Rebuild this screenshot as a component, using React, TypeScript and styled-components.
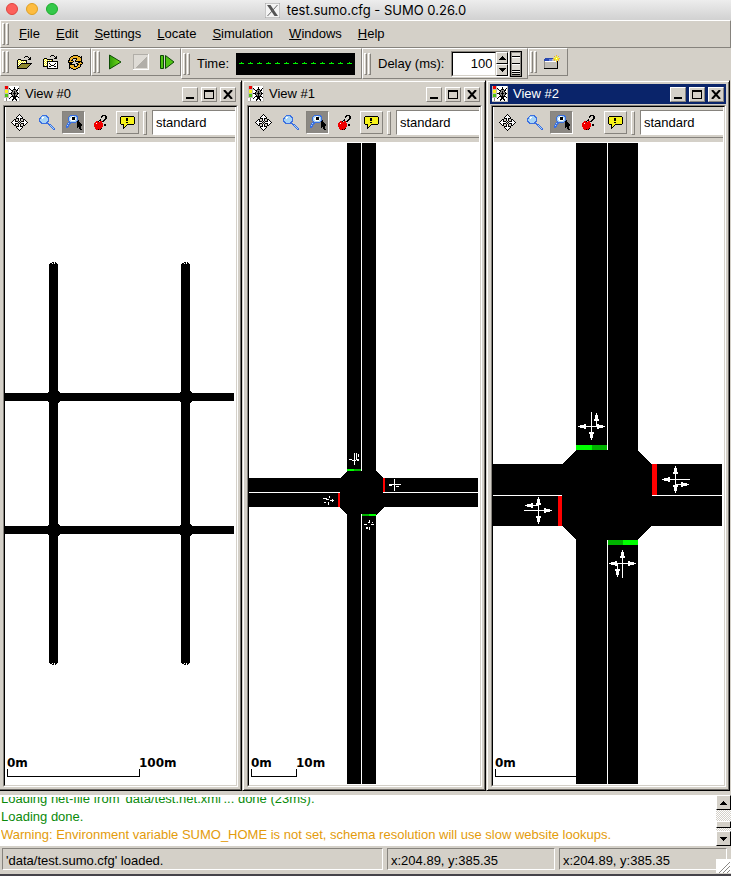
import React from "react";
import styled, { createGlobalStyle, css } from "styled-components";

const face = "#d4d0c8";
const shade = "#86837d";
const uiFont = `"Liberation Sans", Arial, Helvetica, sans-serif`;
const titleFont = `Inter, "Helvetica Neue", sans-serif`;

const GlobalStyle = createGlobalStyle`
  *, *::before, *::after { box-sizing: border-box; }
  html, body { margin: 0; padding: 0; }
  body { background: ${face}; color: #000; font: 13px/18px ${uiFont}; }
  button, input, select { font: inherit; color: inherit; margin: 0; padding: 0; border-radius: 0; }
`;

const raised = css`
  border: 1px solid;
  border-color: #fff ${shade} ${shade} #fff;
`;
const sunken = css`
  border: 1px solid;
  border-color: ${shade} #fff #fff ${shade};
`;

const Page = styled.div`
  display: flex;
  flex-direction: column;
  height: 100vh;
  min-height: 500px;
  overflow: hidden;
`;

const TitleBar = styled.header`
  display: grid;
  grid-template-columns: 1fr auto 1fr;
  align-items: center;
  height: 20px;
  flex: none;
  padding: 0 6px;
  background: linear-gradient(#ededed, #d1d1d1);
`;
const Lights = styled.div`
  display: flex;
  gap: 8px;
  padding-bottom: 2px;
`;
const Light = styled.button<{ $fill: string; $edge: string }>`
  width: 12px;
  height: 12px;
  border: 1px solid ${(p) => p.$edge};
  border-radius: 50%;
  background: ${(p) => p.$fill};
`;
const AppTitle = styled.h1`
  display: flex;
  align-items: center;
  gap: 7px;
  margin: 0;
  font: 400 13px/18px ${titleFont};
  white-space: nowrap;
`;

const MenuBar = styled.nav`
  display: flex;
  align-items: center;
  flex: none;
  height: 28px;
  padding-left: 1px;
  ${raised}
`;
const MenuItem = styled.button`
  border: 0;
  padding: 0 8px;
  background: none;
  line-height: 18px;
  &::first-letter { text-decoration: underline; }
`;

const Grip = styled.span`
  display: flex;
  flex: none;
  gap: 1px;
  &::before, &::after {
    content: "";
    width: 3px;
    height: 22px;
    border: 1px solid;
    border-color: #fff ${shade} ${shade} #fff;
  }
`;
const MenuGrip = styled(Grip)`
  margin-right: 2px;
`;

const DockRow = styled.div`
  display: flex;
  align-items: flex-start;
  flex: none;
  height: 32px;
`;
const Dock = styled.div<{ $width: number; $tall?: boolean }>`
  display: flex;
  align-items: center;
  gap: 3px;
  width: ${(p) => p.$width}px;
  height: ${(p) => (p.$tall ? 31 : 28)}px;
  flex: none;
  padding-left: 1px;
  ${raised}
`;
const ToolButton = styled.button<{ $look?: "raised" | "pressed" }>`
  display: flex;
  align-items: center;
  justify-content: center;
  flex: none;
  width: 23px;
  height: 23px;
  border: 1px solid transparent;
  background: ${(p) => (p.$look === "pressed" ? "#8b8883" : "transparent")};
  border-color: ${(p) =>
    p.$look === "raised"
      ? `#fff ${shade} ${shade} #fff`
      : p.$look === "pressed"
        ? `${shade} #fff #fff ${shade}`
        : "transparent"};
`;
const DockLabel = styled.label`
  padding: 0 4px;
  white-space: nowrap;
`;
const Lcd = styled.output`
  display: flex;
  flex: none;
  width: 119px;
  height: 22px;
  background: #000;
`;
const Spinner = styled.div`
  display: flex;
  flex: none;
  width: 58px;
  height: 26px;
  border: 1px solid;
  border-color: ${shade} #fff #fff ${shade};
`;
const SpinInput = styled.input`
  flex: 1;
  min-width: 0;
  border: 1px solid;
  border-color: #000 ${face} ${face} #000;
  padding-right: 3px;
  background: #fff;
  text-align: right;
`;
const Steps = styled.div`
  display: flex;
  flex-direction: column;
  width: 12px;
`;
const StepButton = styled.button`
  display: flex;
  align-items: center;
  justify-content: center;
  flex: 1;
  min-height: 0;
  border: 1px solid;
  border-color: #fff #000 #000 #fff;
  background: ${face};
`;
const Dial = styled.button`
  display: flex;
  flex: none;
  width: 12px;
  height: 26px;
  margin-left: -2px;
  border: 1px solid #000;
  background: ${face};
`;

const Workspace = styled.main`
  display: grid;
  grid-template-columns: repeat(3, minmax(0, 1fr));
  flex: 1;
  min-height: 0;
  margin: 0 1px 0 -2px;
`;
const ViewWindow = styled.section`
  display: flex;
  flex-direction: column;
  min-width: 0;
  min-height: 0;
  padding: 3px;
  border: 1px solid;
  border-color: ${face} #000 #000 ${face};
  box-shadow: inset 1px 1px 0 #fff, inset -1px -1px 0 #6f6c68;
`;
const ViewTitle = styled.header<{ $active?: boolean }>`
  display: flex;
  align-items: center;
  gap: 3px;
  flex: none;
  height: 20px;
  padding: 0 2px;
  color: ${(p) => (p.$active ? "#fff" : "#000")};
  background: ${(p) => (p.$active ? "#0a246a" : face)};
`;
const ViewName = styled.h2`
  flex: 1;
  margin: 0;
  padding-left: 2px;
  font: 400 13px/18px ${uiFont};
  white-space: nowrap;
`;
const WindowButton = styled.button`
  display: flex;
  align-items: center;
  justify-content: center;
  width: 16px;
  height: 15px;
  ${raised}
  background: ${face};
`;
const ViewFrame = styled.div`
  display: flex;
  flex-direction: column;
  flex: 1;
  min-height: 0;
  margin: 1px 0 0 1px;
  border: 1px solid;
  border-color: ${shade} #fff #fff ${shade};
`;
const ViewBody = styled.div`
  display: flex;
  flex-direction: column;
  flex: 1;
  min-height: 0;
  border: 1px solid;
  border-color: #000 ${face} ${face} #000;
  background: #fff;
`;
const ViewTools = styled.div`
  display: flex;
  align-items: center;
  flex: none;
  gap: 4px;
  height: 35px;
  margin-right: 1px;
  padding: 0 0 4px 2px;
  overflow: hidden;
  background: linear-gradient(${shade}, ${shade}) 0 30px / 100% 1px no-repeat, ${face};
  border-left: 1px solid #fff;
`;
const ThinGrip = styled.span`
  flex: none;
  width: 4px;
  height: 24px;
  ${raised}
`;
const SchemeSelect = styled.select`
  appearance: none;
  flex: 1 0 84px;
  height: 25px;
  margin-left: 1px;
  border: 1px solid;
  border-color: ${shade} #fff #fff ${shade};
  padding-left: 3px;
  background: #fff;
`;
const Canvas = styled.svg`
  display: block;
  flex: 1 1 0;
  min-height: 0;
  width: 100%;
  padding: 1px 2px 1px 0;
`;

const LogRow = styled.section`
  display: flex;
  flex: none;
  height: 51px;
  margin-top: 4px;
  background: #fff;
`;
const LogText = styled.div`
  display: flex;
  flex-direction: column;
  justify-content: flex-end;
  flex: 1;
  min-width: 0;
  margin: 2px 0 2px 1px;
  overflow: hidden;
  white-space: nowrap;
`;
const LogLine = styled.p<{ $warning?: boolean }>`
  flex: none;
  margin: 0;
  color: ${(p) => (p.$warning ? "#e39b0b" : "#0a8a0a")};
`;
const ScrollBar = styled.div`
  display: flex;
  flex-direction: column;
  width: 15px;
  background: repeating-conic-gradient(#fff 0 25%, ${face} 0 50%) 0 0 / 2px 2px;
`;
const ScrollButton = styled.button`
  display: flex;
  align-items: center;
  justify-content: center;
  height: 15px;
  border: 1px solid;
  border-color: #fff #000 #000 #fff;
  background: ${face};
`;
const ScrollTrack = styled.div`
  display: flex;
  flex-direction: column;
  justify-content: flex-end;
  flex: 1;
  padding-bottom: 3px;
`;
const ScrollThumb = styled.div`
  height: 7px;
  border: 1px solid;
  border-color: #fff #000 #000 #fff;
  background: ${face};
`;

const StatusBar = styled.footer`
  display: flex;
  gap: 4px;
  flex: none;
  height: 30px;
  padding: 2px 4px 4px 2px;
  border-bottom: 2px solid #45434a;
  background: ${face};
`;
const StatusField = styled.div<{ $grow?: boolean }>`
  flex: ${(p) => (p.$grow ? "1 1 0" : "0 0 168px")};
  min-width: 0;
  padding: 3px 3px 1px;
  white-space: nowrap;
  overflow: hidden;
  ${sunken}
`;
const SizeGrip = styled.span`
  display: flex;
  align-self: flex-end;
  flex: none;
  margin: 0 -4px -3px -15px;
  background: #fff;
`;

const palette: Record<string, string> = {
  X: "#000", W: "#fff", Y: "#f6f21a", y: "#8f8a2e", O: "#f0b429", G: "#4fc514",
  B: "#3b6fe0", b: "#a8d4f5", R: "#f00000", S: "#8a8884", s: "#c0bdb6", N: "#2a49b0", n: "#6b83dd",
};

function Pixels({ rows }: { rows: string[] }) {
  const width = rows[0].length;
  return (
    <svg width={width} height={rows.length} viewBox={`0 0 ${width} ${rows.length}`} shapeRendering="crispEdges" aria-hidden="true">
      {rows.flatMap((row, y) =>
        [...row].map((c, x) => (palette[c] ? <rect key={`${x}-${y}`} x={x} y={y} width="1" height="1" fill={palette[c]} /> : null)),
      )}
    </svg>
  );
}

const moveIcon = [
  "........X........",
  ".......XWX.......",
  "......XWWWX......",
  ".....XWWWWWX.....",
  ".....XXXWXXX.....",
  "...XX..XWX..XX...",
  "..XWX..XWX..XWX..",
  ".XWWXXX.X.XXXWWX.",
  "XWWWWWWX.XWWWWWWX",
  ".XWWXXX.X.XXXWWX.",
  "..XWX..XWX..XWX..",
  "...XX..XWX..XX...",
  ".....XXXWXXX.....",
  ".....XWWWWWX.....",
  "......XWWWX......",
  ".......XWX.......",
  "........X........",
];
const zoomIcon = [
  "...BBBBB........",
  "..BbbbbBB.......",
  ".BbWWbbbBB......",
  "BBbWbbbbbB......",
  "BbbbbbbbbB......",
  "BbbbbbbbbB......",
  "BBbbbbbbBB......",
  ".BBbbbbBB.......",
  "..BBBBBBBB......",
  ".........BBB....",
  "..........BbB...",
  "...........BbB..",
  "............BbB.",
  ".............BbB",
  "..............BB",
];
const zoomStyleIcon = [
  "....BBBBBBB.....",
  "...BbbWWbbBB....",
  "..BbbWXXXbbB....",
  "..BbWWXXXWbB....",
  "..BbWWXXXWbB....",
  "..BbbWWWWbbBX...",
  "...BbbbbbbBXX...",
  "..BBBBBBBB.XXX..",
  ".BbBB......XXXX.",
  ".BBB.......XXXXX",
  "BbB........XXXXX",
  "BBB........XXXX.",
  "BB.........X.XX.",
  ".............XX.",
  "..............XX",
];
const appleIcon = [
  "........XXXX..",
  ".......XX..XX.",
  ".......X...XX.",
  "...........XX.",
  "......X...XX..",
  ".....XX..XX...",
  "..RRX.RRXX....",
  ".RRRRRRR......",
  "RRWRRRRRR.....",
  "RRRRRRRRR.XX..",
  "RRRRRRRRR.XX..",
  "RRRRRRRRR.....",
  ".RRRRRRR......",
  ".RRRRRRX......",
  "..RRXRX.......",
];
const bubbleIcon = [
  ".XXXXXXXXXXXXX.",
  "XYYYYYYYYYYYYYX",
  "XYYYYYXXYYYYYYX",
  "XYYYYYXXYYYYYYX",
  "XYYYYYXXYYYYYYX",
  "XYYYYYYYYYYYYYX",
  "XYYYYYXXYYYYYYX",
  "XYYYYYYYYYYYYYX",
  ".XXXYYYXXXXXXX.",
  "...XYYX........",
  "...XYX.........",
  "...XX..........",
  "...X...........",
];
const openIcon = [
  ".........XXX....",
  "........X...X.X.",
  ".............XX.",
  "..XXX.......XXX.",
  ".XYWYXXXXXX.....",
  ".XWYWYWYWYX.....",
  ".XYWYWYWYWX.....",
  ".XWYWXXXXXXXXXXX",
  ".XYWXyyyyyyyyyX.",
  ".XWXyyyyyyyyyX..",
  ".XXyyyyyyyyyX...",
  ".XyyyyyyyyyX....",
  ".XXXXXXXXXX.....",
];
const openConfigIcon = [
  ".........XXX....",
  "........X...X.X.",
  ".............XX.",
  "..XXX.......XXX.",
  ".XYWYXXXXXX.....",
  ".XWYWYWYWYX.....",
  ".XYWYXXXXXXXXXXX",
  ".XWYWXWWWWWWWWWX",
  ".XYWYXWXWWWWWXWX",
  ".XWYWXWWXWWWXWWX",
  ".XYWYXWWWXXXWWWX",
  ".XXXXXWXXWWWXXWX",
  ".....XWWWWWWWWWX",
  ".....XXXXXXXXXXX",
];
const reloadIcon = [
  ".....XXXXX.....",
  "...XXOOOOOXX.X.",
  "..XOOOOOOOOOXX.",
  ".XOOOXXXXOOOOX.",
  ".XOOX...XOOOOX.",
  "XXOXX..XOOOOOX.",
  "XOOOOX.XXXXXXX.",
  "XXXXX.....XXOXX",
  ".XXX....XXOOOOX",
  ".XXXXXX..XXOXX.",
  ".XOOOOX..XOOX..",
  ".XOOOOXXXOOOX..",
  ".XXOOOOOOOXX...",
  ".X.XXOOOXX.....",
  ".....XXX.......",
];
const trafficIcon = [
  "sRRRsWWWWWWWWWWs",
  "sRRRsWWWWWXWWWWs",
  "sRRRsXWWWWXWWWXs",
  "ssssssXWWXXXWXWs",
  "sYYYsWWXXSSSXXWs",
  "sYYYsWWWXSXSXWWs",
  "sYYYsWWXSSXSSXWs",
  "sssssXXXSXXXSXXs",
  "sGGGsWWXSSXSSXWs",
  "sGGGsWWWXSXSXWWs",
  "sGGGsWWXXXXXXXWs",
  "sssssWXWWXXXWWXs",
  "WWSWWXWWWXXXWWWs",
  "WWSWWWWWXXWXXWWs",
  "WWSWWWWWXWWWXWWs",
  "ssssssssssssssss",
];
const newWindowIcon = [
  "............O...",
  "..........O.Y.O.",
  "...........YYY..",
  ".NNNNNNNNOYYWYYO",
  "NNNNNnnnssOYYYO.",
  "NNNNNnnnssO.Y.O.",
  "SWWWWWWWWWWWOX..",
  "SssssssssssssX..",
  "SssssssssssssX..",
  "SssssssssssssX..",
  "SssssssssssssX..",
  "SssssssssssssX..",
  "SssssssssssssX..",
  "XXXXXXXXXXXXXX..",
];

function PlayIcon() {
  return (
    <svg width="14" height="16" viewBox="0 0 14 16" aria-hidden="true">
      <defs>
        <linearGradient id="play" x1="0" x2="1"><stop stopColor="#2c9c08" /><stop offset="1" stopColor="#7be01f" /></linearGradient>
      </defs>
      <path d="M1.5 1 13 8 1.5 15Z" fill="url(#play)" stroke="#0c4a04" />
    </svg>
  );
}
function StopIcon() {
  return (
    <svg width="16" height="16" viewBox="0 0 16 16" shapeRendering="crispEdges" aria-hidden="true">
      <path d="M0 0h16v16H0z" fill="#dedbd5" />
      <path d="M14 2v12H2z" fill="#b1aea8" />
      <path d="M0 15V0h15" fill="none" stroke="#b1aea8" />
      <path d="M15.5 0v15.5H0" fill="none" stroke="#fff" />
    </svg>
  );
}
function StepIcon() {
  return (
    <svg width="16" height="16" viewBox="0 0 16 16" aria-hidden="true">
      <path d="M1.5 1.5h3v13h-3z" fill="#4fc514" stroke="#0c4a04" />
      <path d="M6.5 1.5 15 8 6.5 14.5Z" fill="#4fc514" stroke="#0c4a04" />
    </svg>
  );
}
function XLogo() {
  return (
    <svg width="15" height="15" viewBox="0 0 15 15" aria-hidden="true">
      <path d="M0 0h15v15H0z" fill="#f4f4f4" stroke="#999" />
      <path d="M2 2h3.5L13 13H9.5Z" fill="#555" />
      <path d="M12.5 2 2.5 13" stroke="#666" fill="none" />
    </svg>
  );
}
function Arrow({ down }: { down?: boolean }) {
  return (
    <svg width="7" height="4" viewBox="0 0 7 4" shapeRendering="crispEdges" aria-hidden="true">
      <path d={down ? "M0 0h7v1H0zM1 1h5v1H1zM2 2h3v1H2zM3 3h1v1H3z" : "M3 0h1v1H3zM2 1h3v1H2zM1 2h5v1H1zM0 3h7v1H0z"} />
    </svg>
  );
}
function LcdDigits() {
  return (
    <svg width="119" height="22" viewBox="0 0 119 22" shapeRendering="crispEdges" role="img" aria-label="no time">
      {Array.from({ length: 13 }, (_, i) => (
        <path key={i} d={`M${3 + i * 9} 10h5v1h-5zM${5 + i * 9} 9h1v1h-1z`} fill="#00f000" />
      ))}
    </svg>
  );
}
function DialFace() {
  return (
    <svg width="10" height="24" viewBox="0 0 10 24" shapeRendering="crispEdges" aria-hidden="true">
      <path d="M0 0h10v24H0z" fill="#8f8c86" />
      <path d="M1 1h8v22H1z" fill="#dedbd4" />
      <path d="M1 4h8v1H1zM1 11h8v1H1zM1 18h8v1H1zM1 20h8v1H1zM1 22h8v1H1z" />
      <path d="M1 5h8v1H1zM1 12h8v1H1zM1 19h8v1H1z" fill="#fff" />
    </svg>
  );
}
function WindowGlyph({ kind }: { kind: "minimize" | "maximize" | "close" }) {
  return (
    <svg width="10" height="9" viewBox="0 0 10 9" shapeRendering={kind === "close" ? "auto" : "crispEdges"} aria-hidden="true">
      {kind === "minimize" && <path d="M1 7h8v2H1z" />}
      {kind === "maximize" && <path d="M0 0h10v9H0zM1 2v6h8V2z" fillRule="evenodd" />}
      {kind === "close" && <path d="M1 0 9 9M9 0 1 9" stroke="#000" strokeWidth="2" />}
    </svg>
  );
}

function ScaleBar({ length, label }: { length: number; label?: string }) {
  return (
    <g fontFamily={`"DejaVu Sans", Verdana, sans-serif`} fontWeight="700" fontSize="12">
      <text x="2" y="624">0m</text>
      {label && <text x={length + 2} y="624">{label}</text>}
      <path d={`M2.5 626V633.5H${length + 2}.5V626`} fill="none" stroke="#000" />
    </g>
  );
}

function GridView() {
  return (
    <>
      {[44, 176].map((x) => (
        <g key={x}>
          <path d={`M${x} 121h9v399h-9z`} />
          <path d={`M${x + 1} 120h2v1h-2zM${x + 4} 120h1v1h-1zM${x + 6} 120h2v1h-2zM${x + 3} 119h2v1h-2zM${x + 6} 119h1v1h-1z`} />
          <path d={`M${x + 1} 520h2v1h-2zM${x + 4} 520h1v1h-1zM${x + 6} 520h2v1h-2zM${x + 3} 521h2v1h-2zM${x + 6} 521h1v1h-1z`} />
          {[248, 381].map((y) => (
            <path key={y} d={`M${x} ${y}h9l2 2v8l-2 2h-9l-2-2v-8z`} />
          ))}
        </g>
      ))}
      <path d="M0 250h229v8H0zM0 383h229v8H0z" />
      <ScaleBar length={132} label="100m" />
    </>
  );
}

function SmallJunctionView() {
  return (
    <>
      <ScaleBar length={45} label="10m" />
      <path d="M98 0h29v641H98zM0 335h229v29H0z" />
      <path d="M98 328h29l8 7v29l-8 8H98l-7-8v-29z" />
      <path d="M112 0h1v328h-1zM112 371h1v270h-1zM0 349h91v1H0zM134 349h95v1h-95z" fill="#fff" />
      <path d="M98 326h7v2h-7zM120 371h7v2h-7z" fill="#00ff00" />
      <path d="M105 326h7v2h-7zM113 371h7v2h-7z" fill="#00b300" />
      <path d="M134 335h2v14h-2zM89 350h2v14h-2z" fill="#ff0000" />
      <path
        d="M105 310h1v12h-1zM107 310h1v7h-1zM109 311h1v3h-1zM100 316h3v1h-3zM103 317h4v1h-4zM108 316h2v2h-2z
           M145 336h1v12h-1zM146 341h6v1h-6zM140 341h3v2h-3zM147 343h3v1h-3zM143 341h2v1h-2z
           M74 355h4v1h-4zM77 356h3v1h-3zM81 357h4v1h-4zM80 353h1v2h-1zM79 359h1v3h-1zM83 356h1v3h-1zM75 359h2v1h-2z
           M120 377h1v3h-1zM119 379h1v1h-1zM115 381h3v1h-3zM122 381h3v1h-3zM117 384h2v2h-2zM120 384h1v3h-1zM123 379h1v1h-1z"
        fill="#fff"
      />
    </>
  );
}

function LaneArrows({ x, y, turn }: { x: number; y: number; turn: number }) {
  return (
    <g transform={`translate(${x} ${y}) rotate(${turn})`} fill="#fff">
      <path d="M0-14h1v24H0zM-9 0H9v1H-9zM5-8h1v8H5z" />
      <path d="M-2 6h5L1 14H0zM-5-2v5L-13 1V0zM6-2v5L14 1V0zM3-5h5L6-13H5z" />
    </g>
  );
}

function LargeJunctionView() {
  return (
    <>
      <ScaleBar length={140} />
      <path d="M83 0h62v641H83zM0 321h229v62H0z" />
      <path d="M83 308h62l13 13v62l-13 13H83l-14-13v-62z" />
      <path d="M114 0h1v307h-1zM114 397h1v244h-1zM0 352h69v1H0zM159 352h70v1h-70z" fill="#fff" />
      <path d="M83 302h16v5H83zM130 397h15v5h-15z" fill="#00ff00" />
      <path d="M99 302h15v5H99zM115 397h15v5h-15z" fill="#00b300" />
      <path d="M159 321h5v31h-5zM65 353h4v30h-4z" fill="#ff0000" />
      <LaneArrows x={98} y={283} turn={0} />
      <LaneArrows x={183} y={336} turn={90} />
      <LaneArrows x={130} y={421} turn={180} />
      <LaneArrows x={45} y={368} turn={270} />
    </>
  );
}

function View({ name, active, children }: { name: string; active?: boolean; children: React.ReactNode }) {
  return (
    <ViewWindow aria-label={name}>
      <ViewTitle $active={active}>
        <Pixels rows={trafficIcon} />
        <ViewName>{name}</ViewName>
        <WindowButton aria-label="Minimize"><WindowGlyph kind="minimize" /></WindowButton>
        <WindowButton aria-label="Maximize"><WindowGlyph kind="maximize" /></WindowButton>
        <WindowButton aria-label="Close"><WindowGlyph kind="close" /></WindowButton>
      </ViewTitle>
      <ViewFrame>
        <ViewBody>
          <ViewTools>
            <ToolButton aria-label="Recenter view"><Pixels rows={moveIcon} /></ToolButton>
            <ToolButton aria-label="Edit viewport"><Pixels rows={zoomIcon} /></ToolButton>
            <ToolButton $look="pressed" aria-label="Zoom style"><Pixels rows={zoomStyleIcon} /></ToolButton>
            <ToolButton aria-label="Locate object"><Pixels rows={appleIcon} /></ToolButton>
            <ToolButton $look="raised" aria-label="Show tooltips"><Pixels rows={bubbleIcon} /></ToolButton>
            <ThinGrip />
            <SchemeSelect aria-label="Coloring scheme" defaultValue="standard">
              <option>standard</option>
            </SchemeSelect>
          </ViewTools>
          <Canvas viewBox="0 0 229 641" preserveAspectRatio="xMidYMid slice" shapeRendering="crispEdges" role="img" aria-label={`${name} road network`}>
            {children}
          </Canvas>
        </ViewBody>
      </ViewFrame>
    </ViewWindow>
  );
}

const menus = ["File", "Edit", "Settings", "Locate", "Simulation", "Windows", "Help"];

export default function App() {
  return (
    <>
      <GlobalStyle />
      <Page>
        <TitleBar>
          <Lights>
            <Light $fill="#fc605b" $edge="#e0443e" aria-label="Close" />
            <Light $fill="#fdbc40" $edge="#dfa023" aria-label="Minimize" />
            <Light $fill="#34c84a" $edge="#1dad2b" aria-label="Zoom" />
          </Lights>
          <AppTitle><XLogo />test.sumo.cfg - SUMO 0.26.0</AppTitle>
        </TitleBar>
        <MenuBar aria-label="Main menu">
          <MenuGrip />
          {menus.map((m) => (
            <MenuItem key={m}>{m}</MenuItem>
          ))}
        </MenuBar>
        <DockRow>
          <Dock $width={91}>
            <Grip />
            <ToolButton aria-label="Open simulation"><Pixels rows={openIcon} /></ToolButton>
            <ToolButton aria-label="Open network"><Pixels rows={openConfigIcon} /></ToolButton>
            <ToolButton aria-label="Reload"><Pixels rows={reloadIcon} /></ToolButton>
          </Dock>
          <Dock $width={90}>
            <Grip />
            <ToolButton aria-label="Run"><PlayIcon /></ToolButton>
            <ToolButton disabled aria-label="Stop"><StopIcon /></ToolButton>
            <ToolButton aria-label="Step"><StepIcon /></ToolButton>
          </Dock>
          <Dock $width={181} $tall>
            <Grip />
            <DockLabel htmlFor="time">Time:</DockLabel>
            <Lcd id="time"><LcdDigits /></Lcd>
          </Dock>
          <Dock $width={166} $tall>
            <Grip />
            <DockLabel htmlFor="delay">Delay (ms):</DockLabel>
            <Spinner>
              <SpinInput id="delay" defaultValue="100" />
              <Steps>
                <StepButton aria-label="Increase delay"><Arrow /></StepButton>
                <StepButton aria-label="Decrease delay"><Arrow down /></StepButton>
              </Steps>
            </Spinner>
            <Dial aria-label="Delay dial"><DialFace /></Dial>
          </Dock>
          <Dock $width={40}>
            <Grip />
            <ToolButton aria-label="New view"><Pixels rows={newWindowIcon} /></ToolButton>
          </Dock>
        </DockRow>
        <Workspace>
          <View name="View #0"><GridView /></View>
          <View name="View #1"><SmallJunctionView /></View>
          <View name="View #2" active><LargeJunctionView /></View>
        </Workspace>
        <LogRow aria-label="Messages">
          <LogText>
            <LogLine>Loading net-file from 'data/test.net.xml'... done (23ms).</LogLine>
            <LogLine>Loading done.</LogLine>
            <LogLine $warning>Warning: Environment variable SUMO_HOME is not set, schema resolution will use slow website lookups.</LogLine>
          </LogText>
          <ScrollBar>
            <ScrollButton aria-label="Scroll up"><Arrow /></ScrollButton>
            <ScrollTrack><ScrollThumb /></ScrollTrack>
            <ScrollButton aria-label="Scroll down"><Arrow down /></ScrollButton>
          </ScrollBar>
        </LogRow>
        <StatusBar>
          <StatusField $grow>'data/test.sumo.cfg' loaded.</StatusField>
          <StatusField>x:204.89, y:385.35</StatusField>
          <StatusField>x:204.89, y:385.35</StatusField>
          <SizeGrip>
            <svg width="15" height="14" viewBox="0 0 15 14" aria-hidden="true">
              <path d="M3 14 14 3M7 14l7-7M11 14l3-3" stroke="#8a8884" fill="none" />
            </svg>
          </SizeGrip>
        </StatusBar>
      </Page>
    </>
  );
}
